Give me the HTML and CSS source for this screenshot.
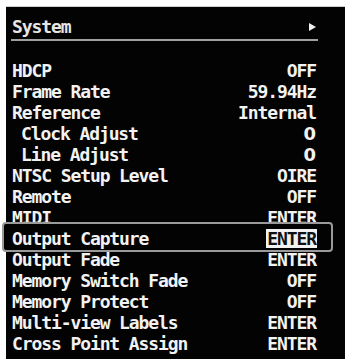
FILE: index.html
```html
<!DOCTYPE html>
<html lang="en">
<head>
  <meta charset="UTF-8" />
  <meta name="viewport" content="width=device-width, initial-scale=1.0">
  <title>System Menu</title>
  <link rel="stylesheet" href="styles.css">
</head>
<body>
  <div class="panel">
    <div class="header">
      <span>System</span>
      <span class="arrow"></span>
    </div>

    <div class="list">
      <div class="row"><span>HDCP</span><span>OFF</span></div>
      <div class="row"><span>Frame Rate</span><span>59.94Hz</span></div>
      <div class="row"><span>Reference</span><span>Internal</span></div>
      <div class="row indent"><span>Clock Adjust</span><span class="num">0</span></div>
      <div class="row indent"><span>Line Adjust</span><span class="num">0</span></div>
      <div class="row"><span>NTSC Setup Level</span><span>OIRE</span></div>
      <div class="row"><span>Remote</span><span>OFF</span></div>
      <div class="row"><span>MIDI</span><span>ENTER</span></div>
      <div class="row selected"><span>Output Capture</span><span class="value">ENTER</span></div>
      <div class="row"><span>Output Fade</span><span>ENTER</span></div>
      <div class="row"><span>Memory Switch Fade</span><span>OFF</span></div>
      <div class="row"><span>Memory Protect</span><span>OFF</span></div>
      <div class="row"><span>Multi-view Labels</span><span>ENTER</span></div>
      <div class="row"><span>Cross Point Assign</span><span>ENTER</span></div>
    </div>
  </div>
</body>
</html>
```

FILE: styles.css
```css
body {
  margin: 0;
  background: #ffffff;
  font-family: 'DejaVu Sans Mono', 'Liberation Mono', monospace;
  font-weight: bold;
  font-size: 18px;
  letter-spacing: -1.1px;
  line-height: 21px;
  color: #f2f2f2;
}
.panel {
  width: 339px;
  height: 353px;
  margin: 6px 0 0 6px;
  box-sizing: border-box;
  padding: 10px 29px 0 6px;
  background: #030303;
  border-top: 1px solid #cfcfcf;
}
.header {
  display: flex;
  justify-content: space-between;
  align-items: center;
  margin: -1px -2px 0 -1px;
  padding: 0 1px 2px 1px;
  border-bottom: 2px solid #a0a0a0;
  color: #e6e6e6;
}
.arrow {
  width: 0;
  height: 0;
  margin-right: 1px;
  border-top: 4px solid transparent;
  border-bottom: 4px solid transparent;
  border-left: 7px solid #f0f0f0;
}
.list {
  margin-top: 19px;
}
.row {
  display: flex;
  justify-content: space-between;
  height: 21px;
}
.indent {
  padding-left: 9px;
}
.num {
  font-family: 'DejaVu Sans', sans-serif;
  letter-spacing: 0;
}
.selected {
  position: relative;
  z-index: 1;
  margin: -6px -17px -3px -10px;
  padding: 4px 15px 1px 8px;
  border: 2px solid #9a9a9a;
  border-radius: 4px;
  background: #030303;
}
.selected .value {
  background: #f2f2f2;
  color: #111;
  margin-right: -1px;
  padding: 0 1px;
  line-height: 19px;
  height: 19px;
  margin-top: 1px;
}
```
